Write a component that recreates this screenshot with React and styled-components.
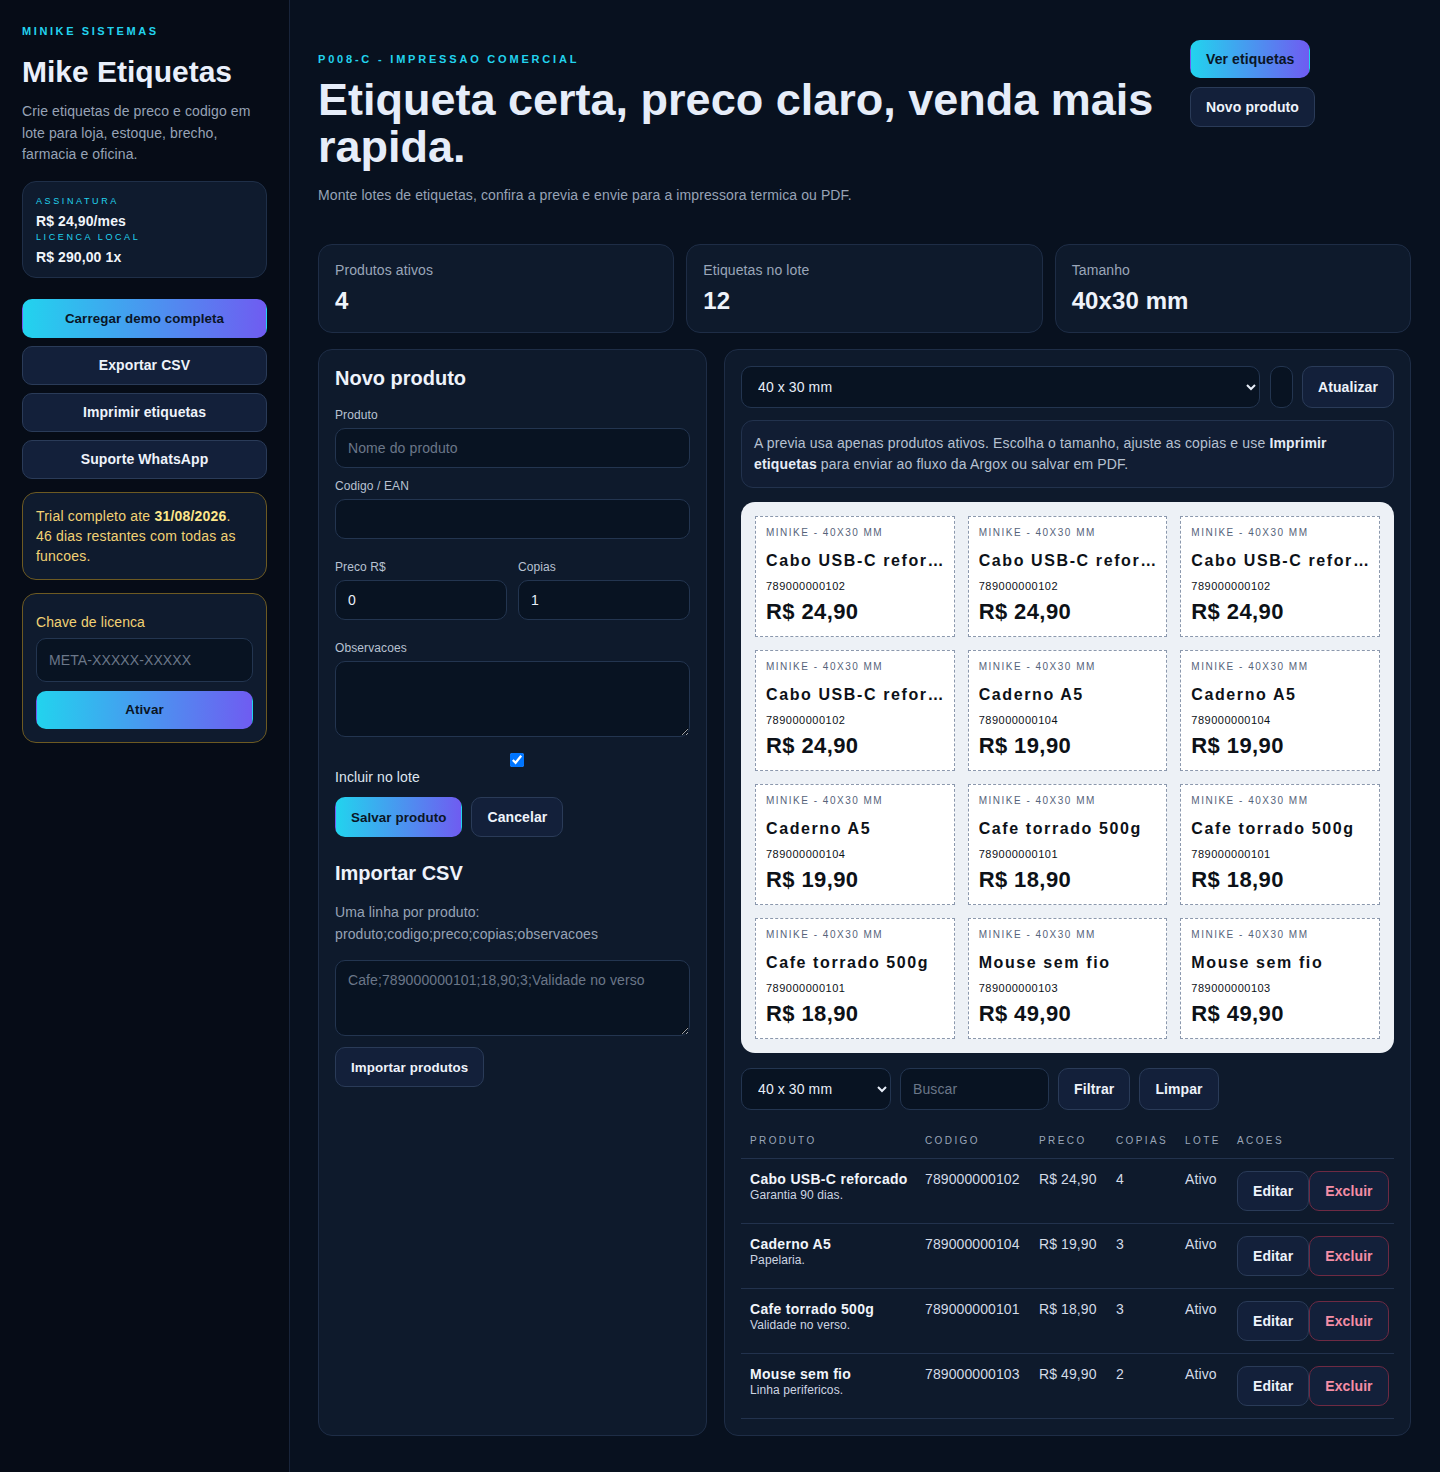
import React from "react";
import styled, { createGlobalStyle } from "styled-components";

const PRODUCTS = [
  { name: "Cabo USB-C reforcado", code: "789000000102", price: "24,90", copies: 4, note: "Garantia 90 dias." },
  { name: "Caderno A5", code: "789000000104", price: "19,90", copies: 3, note: "Papelaria." },
  { name: "Cafe torrado 500g", code: "789000000101", price: "18,90", copies: 3, note: "Validade no verso." },
  { name: "Mouse sem fio", code: "789000000103", price: "49,90", copies: 2, note: "Linha perifericos." },
];

const STATS = [
  { label: "Produtos ativos", value: "4" },
  { label: "Etiquetas no lote", value: "12" },
  { label: "Tamanho", value: "40x30 mm" },
];

// one tile per copy, in product order
const LABELS = PRODUCTS.flatMap((p) => Array.from({ length: p.copies }, () => p));

const GlobalStyle = createGlobalStyle`
  * { box-sizing: border-box; }
  body {
    margin: 0;
    background: #08111f;
    color: #e7eef9;
    font-family: "Liberation Sans", Arial, sans-serif;
    letter-spacing: 0.1px;
  }
  input, select, textarea, button { font-family: inherit; letter-spacing: inherit; }
`;

function App() {
  return (
    <>
      <GlobalStyle />
      <Page>
        <Sidebar>
          <Eyebrow>Minike Sistemas</Eyebrow>
          <Brand>Mike Etiquetas</Brand>
          <Lead>Crie etiquetas de preco e codigo em lote para loja, estoque, brecho, farmacia e oficina.</Lead>

          <PlanCard>
            <PlanTag>Assinatura</PlanTag>
            <PlanPrice>R$ 24,90/mes</PlanPrice>
            <PlanTag>Licenca local</PlanTag>
            <PlanPrice>R$ 290,00 1x</PlanPrice>
          </PlanCard>

          <SideActions>
            <Button primary block small>Carregar demo completa</Button>
            <Button block>Exportar CSV</Button>
            <Button block>Imprimir etiquetas</Button>
            <Button block>Suporte WhatsApp</Button>
          </SideActions>

          <TrialBox>
            Trial completo ate <strong>31/08/2026</strong>. 46 dias restantes com todas as funcoes.
          </TrialBox>

          <LicenseBox>
            <LicenseLabel>Chave de licenca</LicenseLabel>
            <Input tall placeholder="META-XXXXX-XXXXX" />
            <Button primary block small>Ativar</Button>
          </LicenseBox>
        </Sidebar>

        <Main>
          <Header>
            <TitleBlock>
              <Eyebrow wide>P008-C - Impressao comercial</Eyebrow>
              <Title>Etiqueta certa, preco claro, venda mais rapida.</Title>
              <Subtitle>Monte lotes de etiquetas, confira a previa e envie para a impressora termica ou PDF.</Subtitle>
            </TitleBlock>
            <HeaderActions>
              <Button primary>Ver etiquetas</Button>
              <Button>Novo produto</Button>
            </HeaderActions>
          </Header>

          <StatsRow>
            {STATS.map((s) => (
              <StatCard key={s.label}>
                <StatLabel>{s.label}</StatLabel>
                <StatValue>{s.value}</StatValue>
              </StatCard>
            ))}
          </StatsRow>

          <Workspace>
            <Panel>
              <PanelTitle>Novo produto</PanelTitle>
              <Field gap={17}>
                <FieldLabel>Produto</FieldLabel>
                <Input placeholder="Nome do produto" />
              </Field>
              <Field gap={10}>
                <FieldLabel>Codigo / EAN</FieldLabel>
                <Input />
              </Field>
              <TwoCols>
                <Field gap={0}>
                  <FieldLabel>Preco R$</FieldLabel>
                  <Input defaultValue="0" />
                </Field>
                <Field gap={0}>
                  <FieldLabel>Copias</FieldLabel>
                  <Input defaultValue="1" />
                </Field>
              </TwoCols>
              <Field gap={20}>
                <FieldLabel>Observacoes</FieldLabel>
                <TextArea />
              </Field>
              <CheckField>
                <input type="checkbox" defaultChecked />
                Incluir no lote
              </CheckField>
              <ButtonRow>
                <Button primary small>Salvar produto</Button>
                <Button>Cancelar</Button>
              </ButtonRow>

              <PanelTitle spaced>Importar CSV</PanelTitle>
              <Hint>
                Uma linha por produto:
                <br />
                produto;codigo;preco;copias;observacoes
              </Hint>
              <TextArea csv placeholder="Cafe;789000000101;18,90;3;Validade no verso" />
              <ImportButton small>Importar produtos</ImportButton>
            </Panel>

            <Panel>
              <Toolbar>
                <Select defaultValue="40x30">
                  <option value="40x30">40 x 30 mm</option>
                  <option value="50x30">50 x 30 mm</option>
                </Select>
                <TinyInput />
                <Button>Atualizar</Button>
              </Toolbar>

              <InfoBox>
                A previa usa apenas produtos ativos. Escolha o tamanho, ajuste as copias e use{" "}
                <strong>Imprimir etiquetas</strong> para enviar ao fluxo da Argox ou salvar em PDF.
              </InfoBox>

              <Sheet>
                {LABELS.map((p, i) => (
                  <Tag key={i}>
                    <TagBrand>Minike - 40x30 mm</TagBrand>
                    <TagName>{p.name}</TagName>
                    <TagCode>{p.code}</TagCode>
                    <TagPrice>R$ {p.price}</TagPrice>
                  </Tag>
                ))}
              </Sheet>

              <FilterRow>
                <Select narrow defaultValue="40x30">
                  <option value="40x30">40 x 30 mm</option>
                </Select>
                <SearchInput placeholder="Buscar" />
                <Button>Filtrar</Button>
                <Button>Limpar</Button>
              </FilterRow>

              <Table>
                <colgroup>
                  <col style={{ width: 175 }} />
                  <col style={{ width: 114 }} />
                  <col style={{ width: 77 }} />
                  <col style={{ width: 69 }} />
                  <col style={{ width: 52 }} />
                  <col style={{ width: 166 }} />
                </colgroup>
                <thead>
                  <tr>
                    <Th>Produto</Th>
                    <Th>Codigo</Th>
                    <Th>Preco</Th>
                    <Th>Copias</Th>
                    <Th>Lote</Th>
                    <Th>Acoes</Th>
                  </tr>
                </thead>
                <tbody>
                  {PRODUCTS.map((p) => (
                    <tr key={p.code}>
                      <Td>
                        <ProductName>{p.name}</ProductName>
                        <ProductNote>{p.note}</ProductNote>
                      </Td>
                      <Td>{p.code}</Td>
                      <Td>R$ {p.price}</Td>
                      <Td>{p.copies}</Td>
                      <Td>Ativo</Td>
                      <Td>
                        <RowActions>
                          <Button>Editar</Button>
                          <Button danger>Excluir</Button>
                        </RowActions>
                      </Td>
                    </tr>
                  ))}
                </tbody>
              </Table>
            </Panel>
          </Workspace>
        </Main>
      </Page>
    </>
  );
}

const Page = styled.div`
  display: grid;
  grid-template-columns: 290px 1fr;
  min-height: 100vh;
`;

const Sidebar = styled.aside`
  background: #060c17;
  border-right: 1px solid #18243a;
  padding: 24px 22px;
`;

const Eyebrow = styled.div`
  font-size: 11px;
  line-height: 14px;
  font-weight: 700;
  letter-spacing: ${({ wide }) => (wide ? "2.8px" : "2.6px")};
  text-transform: uppercase;
  color: #22d3ee;
`;

const Brand = styled.h1`
  margin: 16px 0 0;
  font-size: 30px;
  line-height: 36px;
  font-weight: 700;
  letter-spacing: 0;
  color: #eaf0fb;
`;

const Lead = styled.p`
  margin: 11px 0 0;
  font-size: 14px;
  line-height: 21.5px;
  color: #97a3b6;
`;

const PlanCard = styled.div`
  margin-top: 15px;
  padding: 12px 13px 11px;
  background: #0f1b2e;
  border: 1px solid #1f2f48;
  border-radius: 14px;
`;

const PlanTag = styled.div`
  font-size: 9px;
  line-height: 14px;
  letter-spacing: 2.6px;
  text-transform: uppercase;
  color: #22d3ee;
`;

const PlanPrice = styled.div`
  margin-top: 4px;
  font-size: 14px;
  line-height: 18px;
  font-weight: 700;
  color: #f1f5fb;
`;

const SideActions = styled.div`
  display: flex;
  flex-direction: column;
  gap: 8px;
  margin-top: 21px;
`;

const Button = styled.button`
  display: inline-flex;
  align-items: center;
  justify-content: center;
  height: ${({ block }) => (block ? "39px" : "40px")};
  padding: 0 15px;
  width: ${({ block }) => (block ? "100%" : "auto")};
  border-radius: 10px;
  border: 1px solid ${({ primary, danger }) => (primary ? "transparent" : danger ? "#6e2a43" : "#2a3b58")};
  background: ${({ primary }) => (primary ? "linear-gradient(90deg, #22d3ee, #6f5cf1)" : "#13203a")};
  color: ${({ primary, danger }) => (primary ? "#0a1526" : danger ? "#f58ea6" : "#eef3fb")};
  font-size: ${({ small }) => (small ? "13.33px" : "14px")};
  font-weight: 700;
  white-space: nowrap;
  cursor: pointer;
`;

const TrialBox = styled.div`
  margin-top: 13px;
  padding: 13px 22px 13px 13px;
  background: #0f1b2e;
  border: 1px solid #6d5a22;
  border-radius: 14px;
  color: #f2d274;
  font-size: 14px;
  line-height: 20px;
  letter-spacing: 0.2px;

  strong {
    color: #fde68a;
  }
`;

const LicenseBox = styled.div`
  margin-top: 13px;
  padding: 18px 13px 13px;
  display: flex;
  flex-direction: column;
  background: #0f1b2e;
  border: 1px solid #6d5a22;
  border-radius: 14px;

  ${Button} {
    height: 38px;
    margin-top: 9px;
  }
`;

const LicenseLabel = styled.div`
  font-size: 14px;
  line-height: 20px;
  color: #f2d274;
  margin-bottom: 6px;
`;

const Input = styled.input`
  width: 100%;
  height: ${({ tall }) => (tall ? "44px" : "40px")};
  padding: 0 12px;
  background: #081322;
  border: 1px solid #233550;
  border-radius: 10px;
  color: #e7eef9;
  font-size: 14px;
  outline: none;

  &::placeholder {
    color: #6b7789;
  }
`;

const Main = styled.main`
  padding: 40px 29px 37px 28px;
  min-width: 0;
`;

const Header = styled.header`
  display: grid;
  grid-template-columns: 1fr 221px;
  gap: 30px;
  align-items: start;
`;

const TitleBlock = styled.div`
  padding-top: 12px;
`;

const Title = styled.h2`
  margin: 10px 0 0;
  font-size: 45px;
  line-height: 47px;
  font-weight: 700;
  letter-spacing: 0;
  color: #e6edf9;
`;

const Subtitle = styled.p`
  margin: 15px 0 0;
  font-size: 14px;
  line-height: 21px;
  color: #97a3b6;
`;

const HeaderActions = styled.div`
  display: flex;
  flex-direction: column;
  align-items: flex-start;
  gap: 9px;

  ${Button} {
    height: 38px;
  }
  ${Button}:last-child {
    height: 40px;
  }
`;

const StatsRow = styled.div`
  display: grid;
  grid-template-columns: repeat(3, 1fr);
  gap: 12px;
  margin-top: 38px;
`;

const StatCard = styled.div`
  padding: 15px 16px 16px;
  background: #0e1a2c;
  border: 1px solid #1e2d46;
  border-radius: 14px;
`;

const StatLabel = styled.div`
  font-size: 14px;
  line-height: 20px;
  color: #9aa6b9;
`;

const StatValue = styled.div`
  margin-top: 6px;
  font-size: 24px;
  line-height: 30px;
  font-weight: 700;
  color: #eef3fb;
`;

const Workspace = styled.div`
  display: grid;
  grid-template-columns: 389px 1fr;
  gap: 17px;
  margin-top: 16px;
`;

const Panel = styled.section`
  display: flex;
  flex-direction: column;
  padding: 16px 16px 16px;
  background: #0e1a2c;
  border: 1px solid #1e2d46;
  border-radius: 14px;
  min-width: 0;
`;

const PanelTitle = styled.h3`
  margin: ${({ spaced }) => (spaced ? "24px 0 0" : "0")};
  font-size: 20px;
  line-height: 24px;
  font-weight: 700;
  letter-spacing: 0;
  color: #eef3fb;
`;

const Field = styled.label`
  display: flex;
  flex-direction: column;
  gap: 5px;
  margin-top: ${({ gap }) => gap}px;
`;

const FieldLabel = styled.span`
  font-size: 12px;
  line-height: 16px;
  color: #b8c2d2;
`;

const TwoCols = styled.div`
  display: grid;
  grid-template-columns: 1fr 1fr;
  gap: 11px;
  margin-top: 20px;
`;

const TextArea = styled.textarea`
  width: 100%;
  height: 76px;
  padding: 10px 12px;
  margin-top: ${({ csv }) => (csv ? "15px" : "0")};
  background: #081322;
  border: 1px solid #233550;
  border-radius: 10px;
  color: #e7eef9;
  font-size: 14px;
  line-height: 18px;
  outline: none;

  &::placeholder {
    color: #6b7789;
  }
`;

const CheckField = styled.label`
  display: flex;
  flex-direction: column;
  margin-top: 16px;
  font-size: 14px;
  line-height: 18px;
  color: #dfe6f1;

  input {
    width: calc(100% - 9px);
    height: 14px;
    margin: 0 0 1px 9px;
  }
`;

const ButtonRow = styled.div`
  display: flex;
  gap: 9px;
  margin-top: 11px;
`;

const Hint = styled.p`
  margin: 16px 0 0;
  font-size: 14px;
  line-height: 22px;
  color: #97a3b6;
`;

const ImportButton = styled(Button)`
  align-self: flex-start;
  margin-top: 11px;
`;

const Toolbar = styled.div`
  display: flex;
  gap: 9px;

  ${Button} {
    height: 42px;
  }
`;

const Select = styled.select`
  flex: ${({ narrow }) => (narrow ? "0 0 150px" : "1")};
  height: 42px;
  padding: 0 10px 0 12px;
  background: #081322;
  border: 1px solid #233550;
  border-radius: 10px;
  color: #e7eef9;
  font-size: 14px;
  color-scheme: dark;
  outline: none;
`;

const TinyInput = styled.input`
  width: 23px;
  height: 42px;
  padding: 0;
  margin-left: 1px;
  background: #081322;
  border: 1px solid #233550;
  border-radius: 10px;
  outline: none;
`;

const InfoBox = styled.div`
  margin-top: 12px;
  padding: 12px 12px;
  background: #111d33;
  border: 1px solid #22324d;
  border-radius: 12px;
  font-size: 14px;
  line-height: 21px;
  letter-spacing: 0.15px;
  color: #b6c1d1;

  strong {
    color: #e6ecf6;
  }
`;

const Sheet = styled.div`
  display: grid;
  grid-template-columns: repeat(3, 1fr);
  gap: 13px;
  margin-top: 14px;
  padding: 14px;
  background: #edf1f6;
  border-radius: 14px;
`;

const Tag = styled.div`
  height: 121px;
  padding: 9px 10px 10px;
  background: #ffffff;
  border: 1px dashed #8b98ad;
  color: #0d1117;
  min-width: 0;
`;

const TagBrand = styled.div`
  font-size: 10px;
  line-height: 14px;
  letter-spacing: 1.5px;
  text-transform: uppercase;
  color: #56637a;
`;

const TagName = styled.div`
  margin-top: 11px;
  font-size: 16px;
  line-height: 20px;
  font-weight: 700;
  letter-spacing: 1.6px;
  white-space: nowrap;
  overflow: hidden;
  text-overflow: ellipsis;
`;

const TagCode = styled.div`
  margin-top: 8px;
  font-size: 11px;
  line-height: 14px;
  letter-spacing: 0.5px;
`;

const TagPrice = styled.div`
  margin-top: 6px;
  font-size: 22px;
  line-height: 26px;
  font-weight: 700;
  letter-spacing: 0.4px;
`;

const FilterRow = styled.div`
  display: flex;
  gap: 9px;
  margin-top: 15px;

  ${Button} {
    height: 42px;
  }
`;

const SearchInput = styled(Input)`
  width: 149px;
  height: 42px;
`;

const Table = styled.table`
  width: 100%;
  margin-top: 12px;
  border-collapse: collapse;
  table-layout: fixed;
`;

const Th = styled.th`
  padding: 12px 9px 10px;
  text-align: left;
  font-size: 10px;
  line-height: 14px;
  font-weight: 400;
  letter-spacing: 2.4px;
  text-transform: uppercase;
  color: #9aa6b9;
  border-bottom: 1px solid #22324d;
  white-space: nowrap;
`;

const Td = styled.td`
  padding: 11px 9px 12px;
  vertical-align: top;
  font-size: 14px;
  line-height: 18px;
  color: #d3dbe7;
  border-bottom: 1px solid #22324d;
  white-space: nowrap;
`;

const ProductName = styled.div`
  font-weight: 700;
  color: #f1f5fb;
  letter-spacing: 0.3px;
`;

const ProductNote = styled.div`
  font-size: 12px;
  line-height: 15px;
  color: #cdd5e2;
`;

const RowActions = styled.div`
  display: flex;
  margin-top: 1px;
`;

export default App;
